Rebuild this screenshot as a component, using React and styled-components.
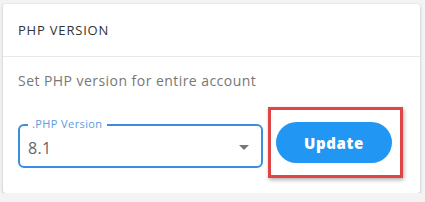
import React from "react";
import styled, { createGlobalStyle } from "styled-components";

const GlobalStyle = createGlobalStyle`
  html, body {
    margin: 0;
    padding: 0;
    background: #f3f3f3;
    font-family: "Open Sans", "Liberation Sans", sans-serif;
  }
`;

const Card = styled.div`
  box-sizing: border-box;
  margin: 4px 0 0 3px;
  width: 417px;
  height: 189px;
  background: #fff;
  border-radius: 3px;
  box-shadow: 0 1px 3px rgba(0, 0, 0, 0.25);
`;

const Header = styled.div`
  box-sizing: border-box;
  height: 53px;
  padding: 0 15px;
  display: flex;
  align-items: center;
  border-bottom: 1px solid #e8e8e8;
  font-size: 13px;
  color: #333;
  letter-spacing: 0.8px;
`;

const Body = styled.div`
  padding: 14px 15px 0 15px;
`;

const Desc = styled.p`
  margin: 0;
  font-size: 14px;
  line-height: 20px;
  color: #777;
  letter-spacing: 0.45px;
`;

const Row = styled.div`
  display: flex;
  align-items: center;
  gap: 5px;
  margin-top: 16px;
`;

const Field = styled.div`
  position: relative;
  box-sizing: border-box;
  width: 245px;
  height: 44px;
  margin-top: 6px;
  border: 2px solid #3a8ee0;
  border-radius: 6px;
  display: flex;
  align-items: center;
  padding: 0 12px 0 8px;
`;

const Legend = styled.span`
  position: absolute;
  top: -9px;
  left: 8px;
  padding: 0 4px;
  background: #fff;
  font-size: 11px;
  line-height: 14px;
  color: #5b9be3;
  letter-spacing: 0.4px;
`;

const Value = styled.span`
  flex: 1;
  font-size: 16px;
  color: #666;
  margin-top: 4px;
  letter-spacing: 0.3px;
`;

const Caret = styled.span`
  width: 0;
  height: 0;
  border-left: 5px solid transparent;
  border-right: 5px solid transparent;
  border-top: 5px solid #777;
  margin-top: 4px;
`;

const Highlight = styled.div`
  box-sizing: border-box;
  width: 135px;
  height: 71px;
  border: 3px solid #e04545;
  box-shadow: 1px 2px 4px rgba(0, 0, 0, 0.3);
  padding: 12px 0 0 5px;
`;

const Button = styled.button`
  width: 116px;
  height: 41px;
  border: none;
  border-radius: 21px;
  background: #2196f3;
  color: #fff;
  font-family: "Open Sans", "Liberation Sans", sans-serif;
  font-weight: 800;
  font-size: 15px;
  letter-spacing: 0.6px;
`;

export default function App() {
  return (
    <>
      <GlobalStyle />
      <Card>
        <Header>PHP VERSION</Header>
        <Body>
          <Desc>Set PHP version for entire account</Desc>
          <Row>
            <Field>
              <Legend>.PHP Version</Legend>
              <Value>8.1</Value>
              <Caret />
            </Field>
            <Highlight>
              <Button>Update</Button>
            </Highlight>
          </Row>
        </Body>
      </Card>
    </>
  );
}
